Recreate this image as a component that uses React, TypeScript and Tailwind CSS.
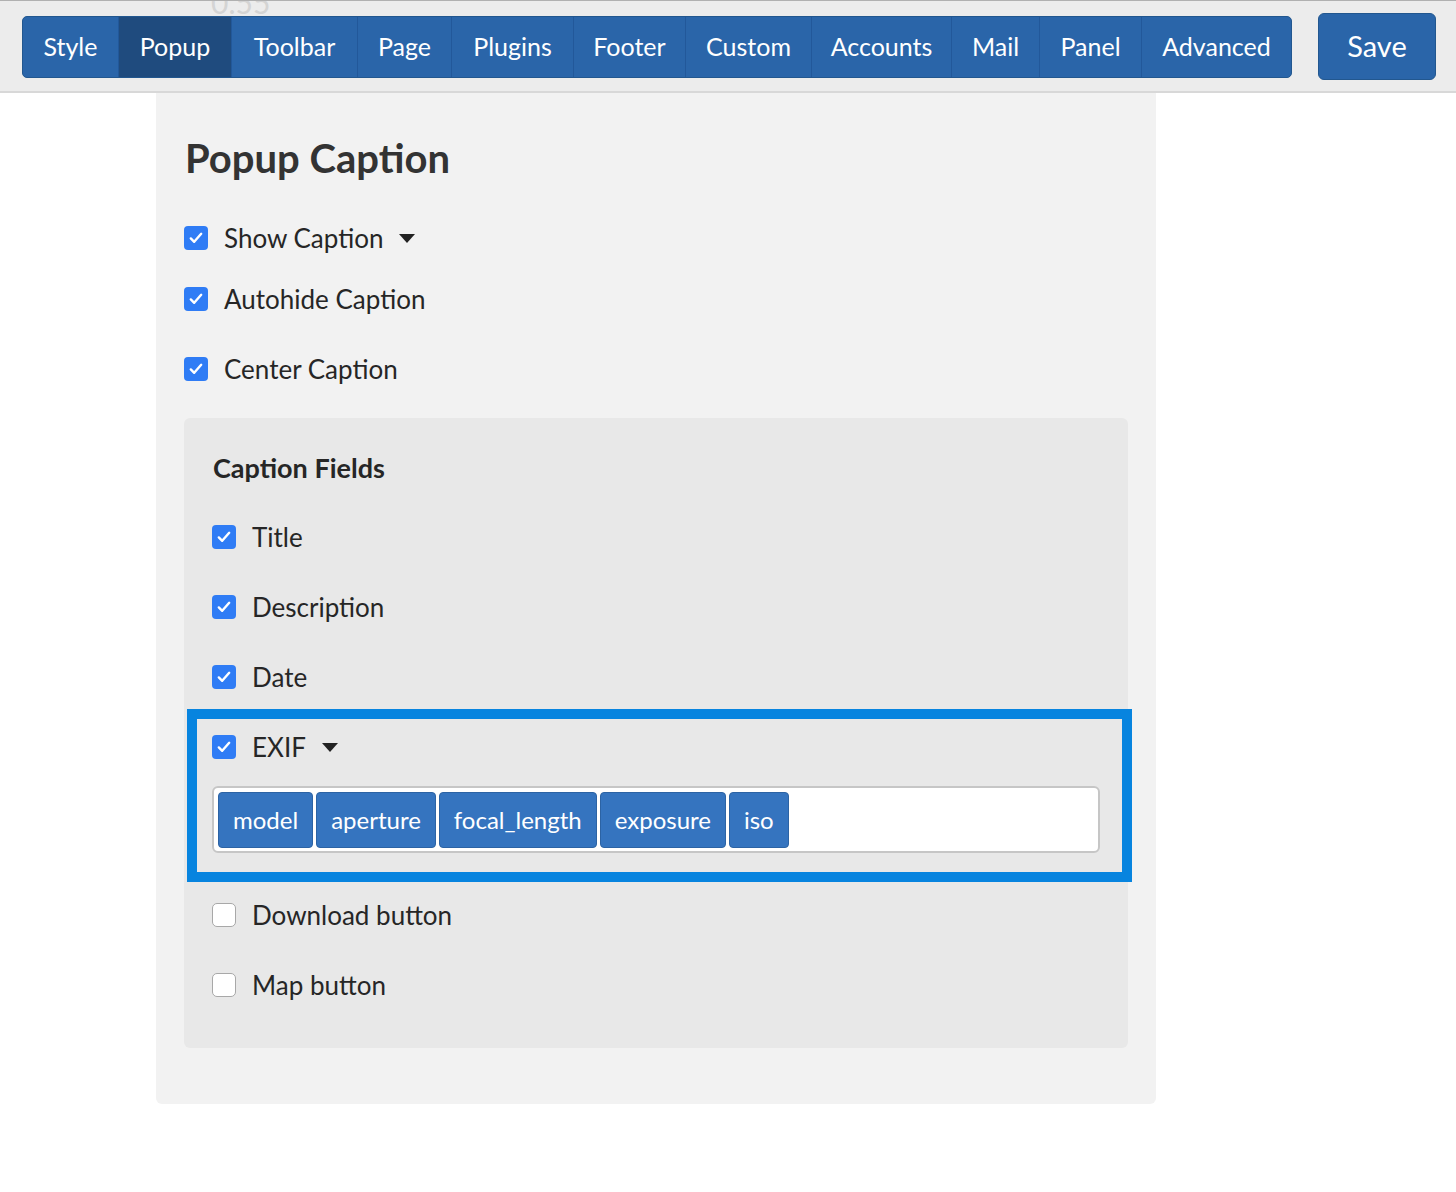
import React from "react";

const tabs: { label: string; w: string; active?: boolean }[] = [
  { label: "Style", w: "w-[96px]" },
  { label: "Popup", w: "w-[113px]", active: true },
  { label: "Toolbar", w: "w-[126px]" },
  { label: "Page", w: "w-[94px]" },
  { label: "Plugins", w: "w-[122px]" },
  { label: "Footer", w: "w-[112px]" },
  { label: "Custom", w: "w-[126px]" },
  { label: "Accounts", w: "w-[140px]" },
  { label: "Mail", w: "w-[88px]" },
  { label: "Panel", w: "w-[102px]" },
  { label: "Advanced", w: "w-[149px]" },
];

const exifTags = ["model", "aperture", "focal_length", "exposure", "iso"];

function Checkbox({ checked }: { checked: boolean }) {
  if (!checked) {
    return <span className="block h-[24px] w-[24px] shrink-0 rounded-[5px] border border-[#a8a8a8] bg-white" />;
  }
  return (
    <span className="flex h-[24px] w-[24px] shrink-0 items-center justify-center rounded-[4px] bg-[#2f7cf5]">
      <svg width="14" height="12" viewBox="0 0 14 12" fill="none">
        <path d="M1.8 6.4 5.2 9.8 12.2 1.8" stroke="white" strokeWidth="2.4" strokeLinecap="round" strokeLinejoin="round" />
      </svg>
    </span>
  );
}

function Caret() {
  return (
    <svg width="16" height="9" viewBox="0 0 16 9" className="ml-[16px] shrink-0">
      <path d="M0 0h16L8 9z" fill="#222" />
    </svg>
  );
}

function Row({
  label,
  checked = true,
  caret = false,
  className = "h-[70px]",
}: {
  label: string;
  checked?: boolean;
  caret?: boolean;
  className?: string;
}) {
  return (
    <div className={`flex items-center ${className}`}>
      <Checkbox checked={checked} />
      <span className="ml-[16px] text-[26px] leading-none text-[#262626]">{label}</span>
      {caret && <Caret />}
    </div>
  );
}

export default function App() {
  return (
    <div className="min-h-[1192px] bg-white font-['Lato',sans-serif]">
      <header className="relative flex h-[93px] items-center overflow-hidden border-t border-b-2 border-t-[#b0b0b0] border-b-[#d8d8d8] bg-[#ececec] pl-[22px] pr-[20px] pt-[2px]">
        <span className="absolute left-[211px] top-[-21px] text-[30px] text-[#d4d4d4]">0.55</span>
        <nav className="relative flex h-[62px] overflow-hidden rounded-[5px] border border-[#22578f] bg-[#2a65a9]">
          {tabs.map((t) => (
            <span
              key={t.label}
              className={`flex ${t.w} items-center justify-center border-r border-[#22589a] text-[25px] text-white last:border-r-0 ${
                t.active ? "bg-[#1f4b7e]" : ""
              }`}
            >
              {t.label}
            </span>
          ))}
        </nav>
        <button className="relative mb-[2px] ml-auto flex h-[67px] w-[118px] items-center justify-center rounded-[6px] border border-[#22578f] bg-[#2a65a9] text-[29px] text-white">
          Save
        </button>
      </header>

      <main className="ml-[156px] w-[1000px] rounded-b-[6px] bg-[#f2f2f2] px-[28px] pb-[56px] pt-[40px]">
        <h1 className="flex h-[50px] items-center pl-[1px] text-[40px] font-bold leading-none text-[#333]">
          Popup Caption
        </h1>
        <Row label="Show Caption" caret className="mt-[29px] h-[52px]" />
        <Row label="Autohide Caption" />
        <Row label="Center Caption" />

        <section className="mt-[14px] rounded-[6px] bg-[#e8e8e8] pb-[28px] pt-[14px]">
          <h2 className="flex h-[70px] items-center px-[29px] text-[27px] font-bold leading-none text-[#262626]">
            Caption Fields
          </h2>
          <div className="px-[28px]">
            <Row label="Title" />
            <Row label="Description" />
            <Row label="Date" />
          </div>

          <div className="-mr-[4px] -mt-[3px] ml-[3px] border-[10px] border-[#0784df] pb-[19px] pl-[15px] pr-[22px]">
            <Row label="EXIF" caret className="h-[56px]" />
            <div className="mt-[11px] flex h-[67px] items-start gap-[3px] rounded-[6px] border-2 border-[#c6c6c6] bg-white pl-[4px] pt-[4px]">
              {exifTags.map((tag) => (
                <span
                  key={tag}
                  className="flex h-[56px] items-center rounded-[4px] border border-[#2c63a4] bg-[#3574bf] px-[14px] text-[24px] text-white"
                >
                  {tag}
                </span>
              ))}
            </div>
          </div>

          <div className="-mt-[2px] px-[28px]">
            <Row label="Download button" checked={false} />
            <Row label="Map button" checked={false} />
          </div>
        </section>
      </main>
    </div>
  );
}
